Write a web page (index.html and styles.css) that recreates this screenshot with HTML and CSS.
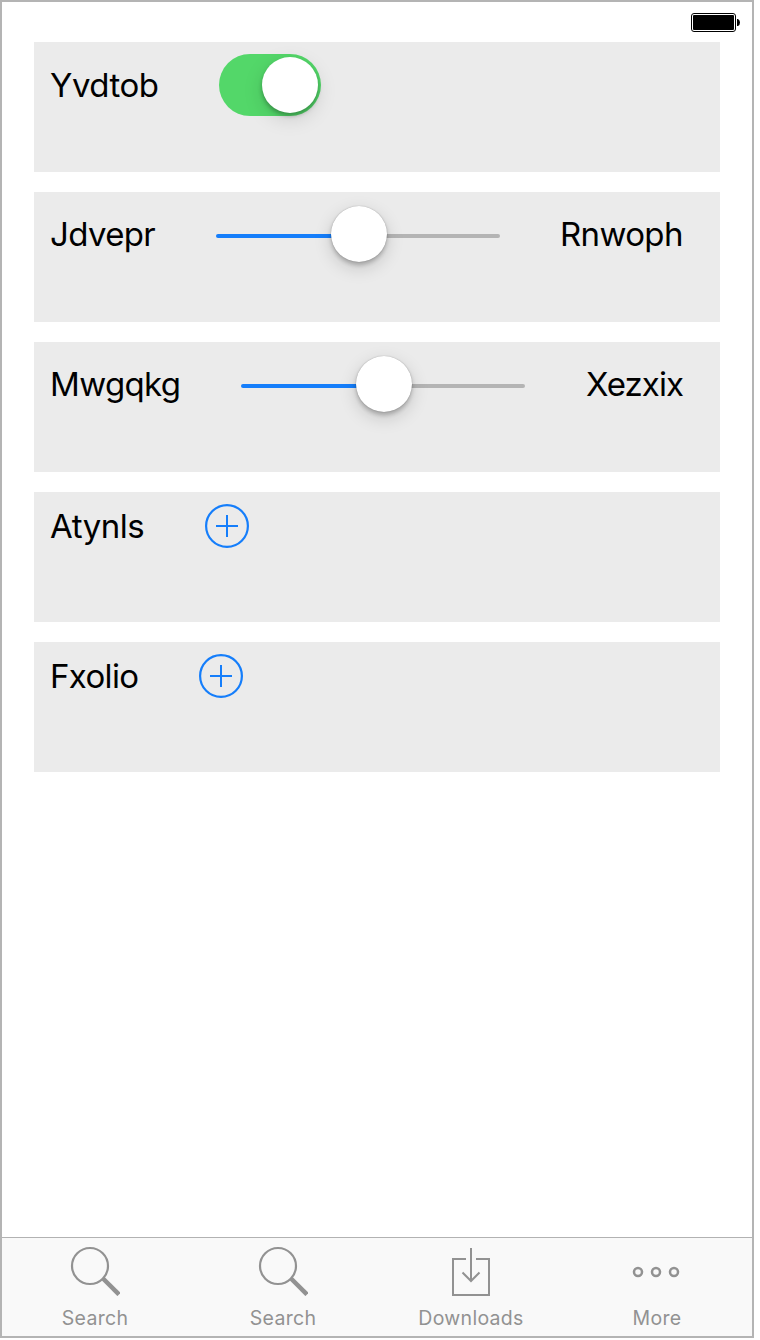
FILE: index.html
```html
<!DOCTYPE html>
<html lang="en">
<head>
<meta charset="utf-8">
<title>Settings</title>
<link rel="stylesheet" href="styles.css">
</head>
<body>
<div class="phone">
  <header class="status">
    <svg class="battery" width="50" height="20" viewBox="0 0 50 20">
      <rect x=".5" y=".5" width="44" height="18" rx="2.5" fill="#fff" stroke="#000"/>
      <rect x="2" y="2" width="41" height="15" rx="1"/>
      <path d="M46 6h1q2 1 2 3.5T47 13h-1z"/>
    </svg>
  </header>
  <main class="rows">
    <section class="row">
      <span class="label yvdtob">Yvdtob</span>
      <div class="switch"><div class="knob"></div></div>
    </section>
    <section class="row">
      <span class="label jdvepr">Jdvepr</span>
      <div class="slider"><div class="track"></div><div class="knob"></div></div>
      <span class="label rnwoph">Rnwoph</span>
    </section>
    <section class="row">
      <span class="label mwgqkg">Mwgqkg</span>
      <div class="slider"><div class="track"></div><div class="knob"></div></div>
      <span class="label xezxix">Xezxix</span>
    </section>
    <section class="row">
      <span class="label atynls">Atynls</span>
      <svg class="add" width="44" height="44" viewBox="0 0 44 44"><circle cx="22" cy="22" r="20.900"/><path d="M11 22h22M22 11v22"/></svg>
    </section>
    <section class="row">
      <span class="label fxolio">Fxolio</span>
      <svg class="add" width="44" height="44" viewBox="0 0 44 44"><circle cx="22" cy="22" r="20.900"/><path d="M11 22h22M22 11v22"/></svg>
    </section>
  </main>
  <nav class="tabs">
    <div class="tab">
      <svg width="50" height="50" viewBox="0 0 50 50"><circle cx="20" cy="20" r="18"/><path class="handle" d="M33 32.500L49 48.500"/></svg>
      <span class="caption search">Search</span>
    </div>
    <div class="tab">
      <svg width="50" height="50" viewBox="0 0 50 50"><circle cx="20" cy="20" r="18"/><path class="handle" d="M33 32.500L49 48.500"/></svg>
      <span class="caption search">Search</span>
    </div>
    <div class="tab">
      <svg width="50" height="50" viewBox="0 0 50 50"><path d="M20 13H7v36h36V13H30M25 2v33M16.500 26.500l8.500 8.500 8.500-8.500"/></svg>
      <span class="caption downloads">Downloads</span>
    </div>
    <div class="tab">
      <svg class="dots" width="50" height="50" viewBox="0 0 50 50"><circle cx="6" cy="26" r="4"/><circle cx="24" cy="26" r="4"/><circle cx="42" cy="26" r="4"/></svg>
      <span class="caption more">More</span>
    </div>
  </nav>
</div>
</body>
</html>
```

FILE: styles.css
```css
* { box-sizing: border-box; }
body { margin: 0; background: #fff; font-family: Inter, "Liberation Sans", sans-serif; }
.phone { width: 754px; height: 1338px; border: 2px solid #b4b4b4; display: flex; flex-direction: column; }
.status { height: 40px; padding: 11px 11px 0 0; display: flex; justify-content: flex-end; align-items: flex-start; }
.rows { flex: 1; padding: 0 32px; display: flex; flex-direction: column; gap: 20px; }
.row { height: 130px; background: #ebebeb; padding: 12px 16px; display: flex; align-items: flex-start; }
.label { font-size: 33px; line-height: 44px; letter-spacing: -.65px; white-space: nowrap; color: #000; }
.yvdtob { width: 169px; padding-top: 9px; letter-spacing: -.5px; }
.jdvepr { width: 166px; padding-top: 8px; }
.mwgqkg { width: 191px; padding-top: 8px; }
.atynls { width: 155px; letter-spacing: -.45px; }
.fxolio { width: 149px; }
.rnwoph, .xezxix { padding-top: 8px; margin-left: 60px; }
.xezxix { padding-left: 1px; letter-spacing: -.9px; }
.knob { width: 56px; height: 56px; border-radius: 50%; background: #fff; }
.switch { width: 102px; height: 62px; border-radius: 31px; background: #53d769; padding: 3px; display: flex; justify-content: flex-end; }
.switch .knob { box-shadow: 0 3px 4px rgba(0,0,0,.26), 0 6px 20px rgba(0,0,0,.13); }
.slider { width: 284px; height: 60px; display: grid; align-items: center; justify-items: center; }
.slider > * { grid-area: 1 / 1; }
.track { width: 284px; height: 4px; margin-top: 4px; border-radius: 2px; background: linear-gradient(to right, #157efb 50%, #b4b4b4 50%); }
.slider .knob { margin-left: 2px; box-shadow: 0 0 1px rgba(0,0,0,.35), 0 3px 4px rgba(0,0,0,.22), 0 6px 18px rgba(0,0,0,.16); }
.add { fill: none; stroke: #157efb; stroke-width: 2; }
.add circle { stroke-width: 2.2; }
.tabs { height: 99px; border-top: 1px solid #b2b2b2; background: #f9f9f9; display: grid; grid-template-columns: 186px 190px 186px 186px; padding-top: 8px; }
.tab { display: flex; flex-direction: column; align-items: center; color: #929292; }
.tab svg { fill: none; stroke: #929292; stroke-width: 2; }
.tab circle { stroke-width: 2.2; }
.tab .dots circle { stroke-width: 2.5; }
.tab .handle { stroke-width: 4.5; }
.caption { font-size: 19.500px; line-height: 24px; margin-top: 10px; letter-spacing: .3px; white-space: nowrap; }
```
